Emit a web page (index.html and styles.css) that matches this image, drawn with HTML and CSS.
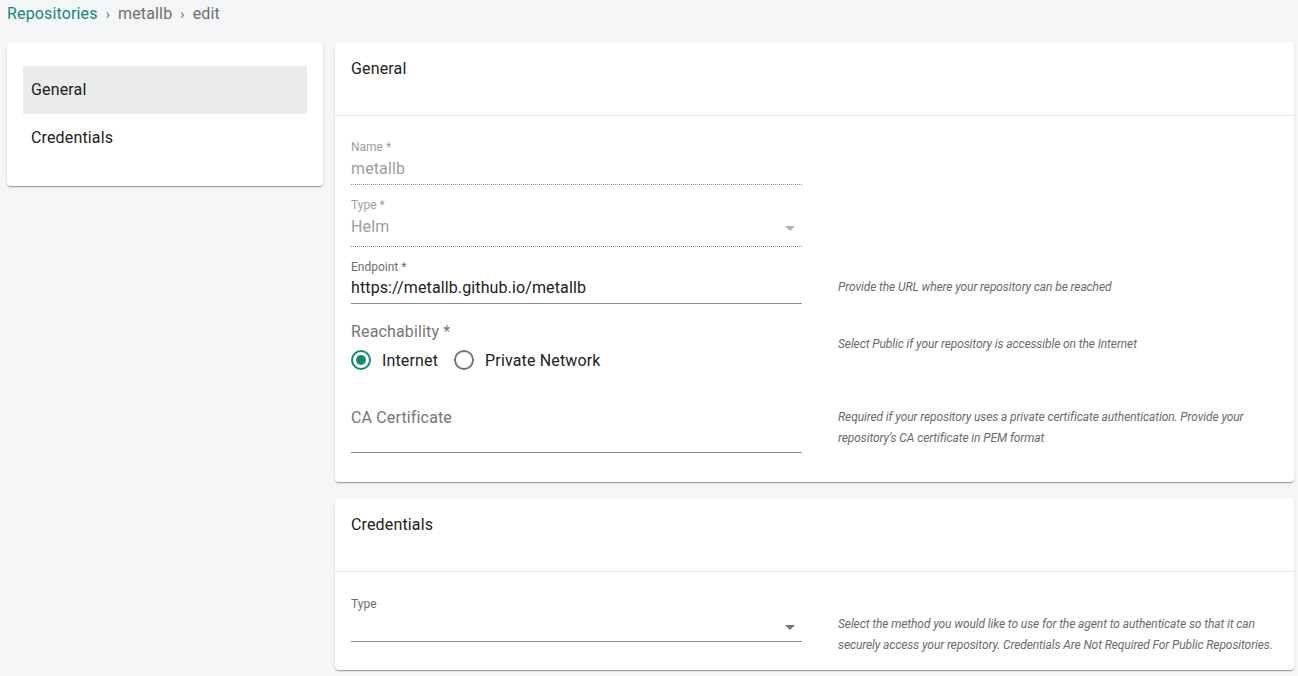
FILE: index.html
```html
<!DOCTYPE html>
<html>
<head>
<meta charset="utf-8">
<link rel="stylesheet" href="styles.css">
</head>
<body>
<div class="page">
  <nav class="crumbs">
    <a class="crumb-link">Repositories</a><span class="sep">›</span><span class="crumb">metallb</span><span class="sep">›</span><span class="crumb">edit</span>
  </nav>
  <div class="layout">
    <aside class="side-card">
      <div class="nav-item active">General</div>
      <div class="nav-item">Credentials</div>
    </aside>
    <main class="main">
      <section class="card">
        <header class="card-head">General</header>
        <div class="card-body general-body">
          <div class="row">
            <div class="field disabled name-field">
              <div class="label">Name *</div>
              <div class="input">metallb</div>
            </div>
            <div></div>
          </div>
          <div class="row row-type">
            <div class="field disabled select">
              <div class="label">Type *</div>
              <div class="input">Helm<span class="arrow"></span></div>
            </div>
            <div></div>
          </div>
          <div class="row row-endpoint">
            <div class="field">
              <div class="label">Endpoint *</div>
              <div class="input">https://metallb.github.io/metallb</div>
            </div>
            <div class="help help-endpoint">Provide the URL where your repository can be reached</div>
          </div>
          <div class="row row-reach">
            <div class="radio-field">
              <div class="big-label">Reachability *</div>
              <div class="radios">
                <label class="radio"><span class="dot checked"></span>Internet</label>
                <label class="radio"><span class="dot"></span>Private Network</label>
              </div>
            </div>
            <div class="help help-reach">Select Public if your repository is accessible on the Internet</div>
          </div>
          <div class="row row-ca">
            <div class="ca-field">
              <div class="placeholder">CA Certificate</div>
            </div>
            <div class="help help-ca">Required if your repository uses a private certificate authentication. Provide your repository’s CA certificate in PEM format</div>
          </div>
        </div>
      </section>
      <section class="card">
        <header class="card-head">Credentials</header>
        <div class="card-body cred-body">
          <div class="row">
            <div class="field select cred-select">
              <div class="label">Type</div>
              <div class="input"><span class="arrow dark"></span></div>
            </div>
            <div class="help help-cred">Select the method you would like to use for the agent to authenticate so that it can securely access your repository. Credentials Are Not Required For Public Repositories.</div>
          </div>
        </div>
      </section>
    </main>
  </div>
</div>
</body>
</html>
```
FILE: styles.css
```css
* { box-sizing: border-box; }
html, body { margin: 0; padding: 0; }
body {
  background: #f5f6f8;
  font-family: Roboto, "Liberation Sans", sans-serif;
  color: #212121;
  width: 1298px;
  height: 676px;
  overflow: hidden;
}
.page { padding: 2px 4px 0 7px; }
.crumbs {
  height: 24px;
  line-height: 24px;
  font-size: 16px;
  letter-spacing: 0.15px;
  display: flex;
  align-items: center;
}
.crumb-link { color: #0f8a78; }
.crumb { color: #6f6f6f; }
.sep { color: #6f6f6f; margin: 0 8px; font-size: 14px; }
.layout {
  margin-top: 16px;
  display: flex;
  gap: 12px;
  align-items: flex-start;
}
.side-card, .card {
  background: #fff;
  border-radius: 4px;
  box-shadow: 0 2px 1px -1px rgba(0,0,0,.2), 0 1px 1px 0 rgba(0,0,0,.14), 0 1px 3px 0 rgba(0,0,0,.12);
}
.side-card {
  width: 316px;
  flex: none;
  padding: 24px 16px;
}
.nav-item {
  height: 48px;
  line-height: 48px;
  padding-left: 8px;
  font-size: 16px;
  letter-spacing: 0.15px;
  color: #212121;
}
.nav-item.active { background: #ebebeb; }
.main {
  flex: 1;
  display: flex;
  flex-direction: column;
  gap: 16px;
}
.card-head {
  height: 74px;
  padding: 15px 16px 0;
  font-size: 16px;
  line-height: 24px;
  letter-spacing: 0.15px;
  border-bottom: 1px solid #e2e2e2;
  color: #212121;
}
.card-body { padding: 0 16px; }
.general-body { padding-top: 23px; padding-bottom: 29px; }
.cred-body { padding-top: 24px; padding-bottom: 28px; }
.row {
  display: grid;
  grid-template-columns: 451px 1fr;
  column-gap: 36px;
  align-items: start;
}
.row-type { margin-top: 12px; }
.row-endpoint { margin-top: 12px; }
.row-reach { margin-top: 16px; }
.row-ca { margin-top: 34px; }
.field .label {
  font-size: 12px;
  line-height: 16px;
  height: 16px;
  color: #6f6f6f;
}
.field .input {
  position: relative;
  font-size: 16px;
  line-height: 24px;
  letter-spacing: 0.12px;
  height: 29px;
  padding-top: 1px;
  border-bottom: 1px solid #8c8c8c;
  color: #212121;
}
.field.name-field .input { height: 30px; padding-top: 2px; }
.field.disabled .label { color: #9e9e9e; }
.field.disabled .input {
  color: #9e9e9e;
  border-bottom: 1px dotted #8f8f8f;
}
.field.select .input { height: 34px; padding-top: 2px; }
.field.cred-select .input { height: 30px; }
.arrow {
  position: absolute;
  right: 7px;
  top: 13px;
  width: 0;
  height: 0;
  border-left: 5px solid transparent;
  border-right: 5px solid transparent;
  border-top: 5px solid #b4b4b4;
}
.arrow.dark { border-top-color: #737373; }
.big-label {
  font-size: 16px;
  line-height: 24px;
  letter-spacing: 0.15px;
  color: #757575;
}
.radios {
  display: flex;
  gap: 16px;
  margin-top: 4px;
  height: 24px;
  align-items: center;
}
.radio {
  display: flex;
  align-items: center;
  font-size: 16px;
  letter-spacing: 0.15px;
  color: #212121;
}
.dot {
  width: 20px;
  height: 20px;
  border-radius: 50%;
  border: 2px solid #757575;
  margin-right: 11px;
  position: relative;
}
.dot.checked { border-color: #0f8a78; }
.dot.checked::after {
  content: "";
  position: absolute;
  left: 3px;
  top: 3px;
  width: 10px;
  height: 10px;
  border-radius: 50%;
  background: #0f8a78;
}
.ca-field {
  height: 47px;
  border-bottom: 1px solid #8c8c8c;
}
.placeholder {
  font-size: 16px;
  line-height: 24px;
  letter-spacing: 0.15px;
  color: #757575;
}
.help {
  font-size: 12px;
  line-height: 21px;
  font-style: italic;
  letter-spacing: -0.1px;
  color: #6b6b6b;
}
.help-endpoint { padding-top: 18px; }
.help-reach { padding-top: 14px; }
.help-ca { padding-top: 1px; }
.help-cred { padding-top: 18px; margin-bottom: -14px; }
```
